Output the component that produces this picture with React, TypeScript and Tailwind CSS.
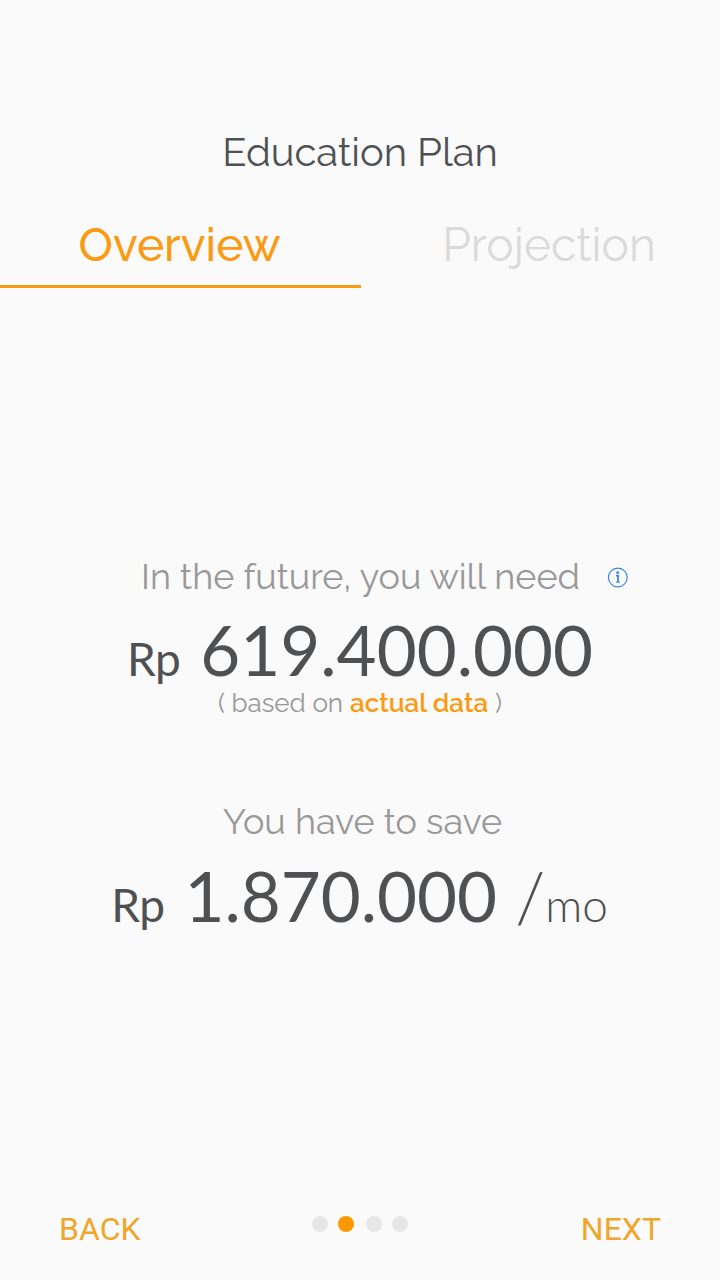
export default function App() {
  return (
    <main className="flex h-[1280px] w-[720px] flex-col overflow-hidden bg-[#fafafa] font-[Raleway,Lato,sans-serif] text-[#4f5052]">
      <h1 className="mt-32 flex h-12 items-center justify-center text-[40px] tracking-[-0.05px]">Education Plan</h1>

      <nav className="mt-9 grid h-19 grid-cols-2 text-[46px] leading-[63px]">
        <button className="w-[361px] border-b-3 border-[#fb9a13] pr-0.5 pb-[7px] text-center font-medium text-[#fb9a13]">Overview</button>
        <button className="pb-2.5 pl-[18px] text-center text-[#dadada]">Projection</button>
      </nav>

      <section className="mt-[264px] flex flex-col">
        <div className="flex h-12 items-center pl-[141px] text-[36px] font-[370] text-[#989898]">
          <p className="mb-px w-[466px] whitespace-nowrap">In the future, you will need</p>
          <svg className="mt-[3px] h-[21px] w-[21px]" viewBox="0 0 21 21" fill="none" aria-label="Information">
            <circle cx="10.8" cy="10.5" r="9.4" stroke="#3985df" strokeWidth="1.15" />
            <circle cx="10.7" cy="5.7" r="1.4" fill="#3985df" />
            <path d="M9 8.6H11V15" stroke="#3985df" strokeWidth="1.8" />
            <path d="M9 15.2H13" stroke="#3985df" strokeWidth="1" />
          </svg>
        </div>
        <p className="mt-[18px] flex h-16 items-baseline justify-center font-[Lato,sans-serif] text-[69px] leading-16">
          <span className="mr-5 text-[46px] tracking-[-0.5px]">Rp</span>
          <span>619.400.000</span>
        </p>
        <p className="mt-[5px] flex h-8 items-center justify-center gap-[7px] text-[26px] leading-8 font-[370] text-[#989898]">
          <span>( based on</span>
          <strong className="font-semibold text-[#fb9a13]">actual data</strong>
          <span>)</span>
        </p>
      </section>

      <section className="mt-[78px] flex flex-col">
        <p className="flex h-12 items-center justify-center pl-[5px] text-[36px] font-[370] text-[#989898]">You have to save</p>
        <p className="mt-[19px] flex h-16 items-baseline justify-center pr-px font-[Lato,sans-serif] text-[69px] leading-16">
          <span className="mr-5 text-[46px] tracking-[-0.5px]">Rp</span>
          <span>1.870.000</span>
          <span className="ml-[18px] font-light">/</span>
          <span className="text-[46px] font-light">mo</span>
        </p>
      </section>

      <footer className="mt-auto mb-[23px] flex h-14 items-center justify-between pr-[59px] pl-[59px] font-[Roboto,sans-serif] text-[32px] text-[#f0a52b]">
        <button>BACK</button>
        <div className="mr-[2px] mb-2.5 flex items-center">
          <i className="size-4 rounded-full bg-[#e7e7e7]" />
          <i className="ml-2.5 size-4 rounded-full bg-[#ff9800]" />
          <i className="ml-3 size-4 rounded-full bg-[#e7e7e7]" />
          <i className="ml-2.5 size-4 rounded-full bg-[#e7e7e7]" />
        </div>
        <button>NEXT</button>
      </footer>
    </main>
  );
}
